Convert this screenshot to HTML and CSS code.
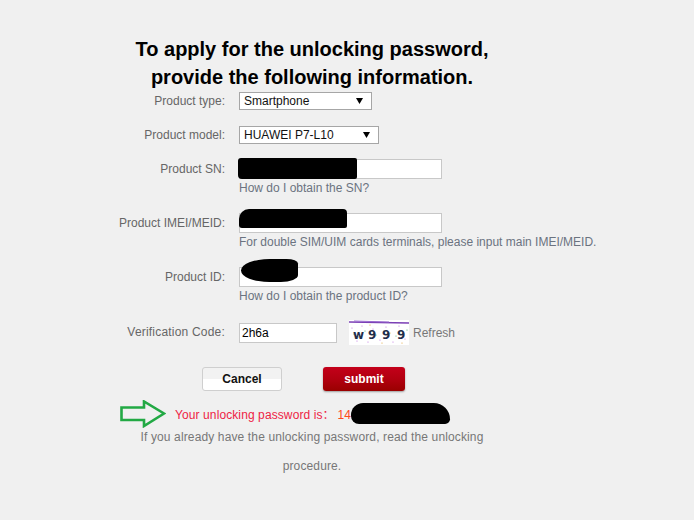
FILE: index.html
```html
<!DOCTYPE html>
<html lang="en">
<head>
<meta charset="UTF-8">
<title>Unlocking password</title>
<link rel="stylesheet" href="styles.css">
</head>
<body>
<div class="page">
  <h1 class="title">To apply for the unlocking password,<br>provide the following information.</h1>

  <div class="unlock-form">
    <div class="row row-select">
      <label class="label">Product type:</label>
      <div class="field">
        <div class="select select-type">
          <span>Smartphone</span>
          <svg class="arrow" width="7" height="6" viewBox="0 0 7 6"><polygon points="0,0 7,0 3.5,6" fill="#000"/></svg>
        </div>
      </div>
    </div>

    <div class="row row-select gap-16">
      <label class="label">Product model:</label>
      <div class="field">
        <div class="select select-model">
          <span>HUAWEI P7-L10</span>
          <svg class="arrow" width="7" height="6" viewBox="0 0 7 6"><polygon points="0,0 7,0 3.5,6" fill="#000"/></svg>
        </div>
      </div>
    </div>

    <div class="row gap-15">
      <label class="label">Product SN:</label>
      <div class="field">
        <div class="input-wrap">
          <input class="text-input wide" type="text" value="">
          <span class="redact redact-sn"></span>
        </div>
        <div class="hint">How do I obtain the SN?</div>
      </div>
    </div>

    <div class="row gap-18">
      <label class="label">Product IMEI/MEID:</label>
      <div class="field">
        <div class="input-wrap">
          <input class="text-input wide" type="text" value="">
          <span class="redact redact-imei"></span>
        </div>
        <div class="hint">For double SIM/UIM cards terminals, please input main IMEI/MEID.</div>
      </div>
    </div>

    <div class="row gap-18">
      <label class="label">Product ID:</label>
      <div class="field">
        <div class="input-wrap">
          <input class="text-input wide" type="text" value="">
          <span class="redact redact-id"></span>
        </div>
        <div class="hint">How do I obtain the product ID?</div>
      </div>
    </div>

    <div class="row gap-17">
      <label class="label label-code">Verification Code:</label>
      <div class="field code-field">
        <input class="text-input code" type="text" value="2h6a">
        <svg class="captcha" width="60" height="25" viewBox="0 0 60 25">
          <rect width="60" height="25" fill="#fff"/>
          <line x1="0" y1="2" x2="60" y2="3" stroke="#7b3fb5" stroke-width="1.5"/>
          <line x1="5" y1="1" x2="40" y2="2" stroke="#9a6ad0" stroke-width="1"/>
          <g fill="#c070e0">
            <circle cx="3" cy="8" r="0.6"/><circle cx="8" cy="21" r="0.6"/><circle cx="13" cy="6" r="0.6"/>
            <circle cx="19" cy="22" r="0.6"/><circle cx="24" cy="9" r="0.6"/><circle cx="31" cy="20" r="0.6"/>
            <circle cx="37" cy="7" r="0.6"/><circle cx="44" cy="22" r="0.6"/><circle cx="50" cy="6" r="0.6"/>
            <circle cx="56" cy="19" r="0.6"/>
          </g>
          <g fill="#40b070">
            <circle cx="5" cy="14" r="0.6"/><circle cx="16" cy="11" r="0.6"/><circle cx="27" cy="15" r="0.6"/>
            <circle cx="35" cy="11" r="0.6"/><circle cx="47" cy="16" r="0.6"/><circle cx="58" cy="10" r="0.6"/>
          </g>
          <g fill="#e0a030">
            <circle cx="10" cy="17" r="0.6"/><circle cx="21" cy="5" r="0.6"/><circle cx="33" cy="23" r="0.6"/>
            <circle cx="41" cy="13" r="0.6"/><circle cx="53" cy="23" r="0.6"/>
          </g>
          <text x="4" y="19" class="captcha-text">w</text>
          <text x="19" y="19" class="captcha-text">9</text>
          <text x="33" y="19" class="captcha-text">9</text>
          <text x="48" y="19" class="captcha-text">9</text>
        </svg>
        <a class="refresh">Refresh</a>
      </div>
    </div>

    <div class="buttons">
      <button class="btn btn-cancel" type="button">Cancel</button>
      <button class="btn btn-submit" type="button">submit</button>
    </div>

    <div class="message">
      <svg class="pointer" width="46" height="28" viewBox="0 0 46 28">
        <polygon points="1.5,7.5 24,7.5 24,1.5 44,13.5 24,26 24,20 1.5,20" fill="none" stroke="#22a944" stroke-width="2.6" stroke-linejoin="miter"/>
      </svg>
      <span class="message-text">Your unlocking password is<span class="colon">：</span><span class="password">14</span></span>
      <span class="redact-msg"></span>
    </div>

    <p class="note">If you already have the unlocking password, read the unlocking procedure.</p>
  </div>
</div>
</body>
</html>
```

FILE: styles.css
```css
body {
  margin: 0;
  background-color: #f0f0f0;
  font-family: "Liberation Sans", Arial, sans-serif;
  font-size: 12px;
}
.page {
  width: 694px;
}
.title {
  width: 624px;
  margin: 35px 0 0;
  font-size: 20px;
  line-height: 28px;
  font-weight: bold;
  text-align: center;
  color: #000;
}
.unlock-form {
  margin-top: 1px;
}
.row {
  display: grid;
  grid-template-columns: 225px 1fr;
  column-gap: 14px;
  align-items: start;
}
.gap-15 { margin-top: 15px; }
.gap-16 { margin-top: 16px; }
.gap-17 { margin-top: 17px; }
.gap-18 { margin-top: 18px; }
.label {
  text-align: right;
  color: #666;
  line-height: 20px;
  white-space: nowrap;
}
.row-select .label {
  line-height: 18px;
}
.label-code {
  margin-top: 2px;
  letter-spacing: 0.2px;
}
.select {
  box-sizing: border-box;
  height: 18px;
  display: flex;
  align-items: center;
  justify-content: space-between;
  padding: 0 8px 0 4px;
  background-color: #fff;
  border: 1px solid #a6a6a6;
  color: #111;
}
.select-type { width: 133px; }
.select-model { width: 140px; }
.input-wrap {
  position: relative;
  width: 203px;
}
.text-input {
  box-sizing: border-box;
  height: 20px;
  margin: 0;
  padding: 0 2px;
  border: 1px solid #c8c8c8;
  background-color: #fff;
  font-family: "Liberation Sans", Arial, sans-serif;
  font-size: 12px;
  color: #000;
  outline: none;
}
.wide { width: 203px; }
.code { width: 98px; }
.redact {
  position: absolute;
  background-color: #000;
}
.redact-sn {
  left: -1px;
  top: -1px;
  width: 119px;
  height: 21px;
  border-radius: 3px 2px 2px 4px;
}
.redact-imei {
  left: 0;
  top: -4px;
  width: 108px;
  height: 19px;
  border-radius: 10px 4px 2px 3px;
}
.redact-id {
  left: 2px;
  top: -8px;
  width: 57px;
  height: 23px;
  border-radius: 50% 20% 30% 50%;
}
.hint {
  margin-top: 2px;
  line-height: 14px;
  color: #6b7380;
  white-space: nowrap;
}
.code-field {
  display: flex;
  align-items: center;
  height: 25px;
}
.captcha {
  display: block;
  margin-left: 12px;
}
.captcha-text {
  font-family: "DejaVu Sans", sans-serif;
  font-size: 12px;
  font-weight: bold;
  fill: #1f2d4a;
}
.refresh {
  margin-left: 4px;
  color: #777;
  cursor: pointer;
}
.buttons {
  display: flex;
  gap: 41px;
  margin-top: 22px;
  padding-left: 202px;
}
.btn {
  box-sizing: border-box;
  height: 24px;
  font-family: "Liberation Sans", Arial, sans-serif;
  font-size: 12px;
  font-weight: bold;
  border-radius: 3px;
  cursor: pointer;
}
.btn-cancel {
  width: 80px;
  color: #111;
  border: 1px solid #cfcfcf;
  background: linear-gradient(#f2f2f2 50%, #fff 50%);
}
.btn-submit {
  width: 82px;
  color: #fff;
  border: none;
  background: linear-gradient(#c4001a 0%, #b20010 50%, #990000 100%);
  box-shadow: 0 1px 2px rgba(0, 0, 0, 0.35);
}
.message {
  display: flex;
  align-items: center;
  height: 27px;
  margin-top: 9px;
  padding-left: 120px;
}
.pointer {
  display: block;
}
.message-text {
  margin-left: 9px;
  color: #ee2244;
  letter-spacing: 0.1px;
}
.colon {
  display: inline-block;
  width: 15px;
  font-family: "Noto Sans CJK SC", sans-serif;
}
.password {
  color: #ff4a1c;
}
.redact-msg {
  display: inline-block;
  width: 99px;
  height: 21px;
  margin-left: 0;
  background-color: #000;
  border-radius: 30px 40px 12px 20px;
}
.note {
  width: 350px;
  margin: -4px 0 0 137px;
  line-height: 29px;
  text-align: center;
  color: #777;
  letter-spacing: 0.13px;
}
```
